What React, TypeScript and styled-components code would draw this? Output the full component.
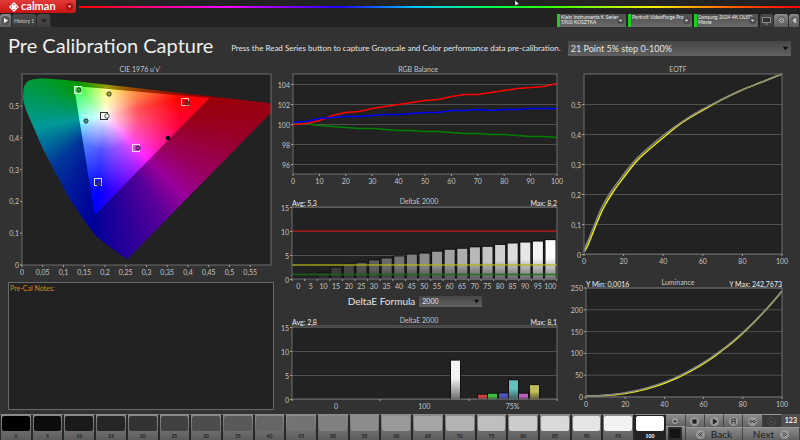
import React from "react";
import styled, { createGlobalStyle } from "styled-components";

const Global = createGlobalStyle`
  * { box-sizing: border-box; }
  html, body { margin: 0; background: #222; }
  body { font-family: Lato, sans-serif; color: #e6e6e6; }
  button, select, textarea { font-family: inherit; margin: 0; }
`;

const Page = styled.div`
  display: flex;
  flex-direction: column;
  min-height: 100vh;
  background: #222;
`;

const TopBar = styled.header`
  position: relative;
  display: flex;
  align-items: center;
  gap: 3px;
  height: 13px;
`;

const Pointer = styled.svg`
  position: absolute;
  left: 64.3%;
  top: 0;
`;

const BrandButton = styled.button`
  display: flex;
  align-items: center;
  width: 76px;
  height: 13px;
  padding: 0 3px 0 9px;
  border: 0;
  border-radius: 0 0 3px 0;
  background: linear-gradient(#e23a3a, #c81414);
  color: #fff;
  font-size: 11px;
  line-height: 13px;
  font-weight: 700;
  gap: 2px;
`;

const BrandName = styled.span`
  flex: 1;
  margin-top: -2px;
  text-align: left;
`;

const Spectrum = styled.div`
  flex: 1;
  height: 2px;
  background: linear-gradient(90deg, #f00, #f0f 20%, #20f 36%, #0cf 47%, #0f4 58%, #4f0 67%, #fe0 80%, #f60 90%, #f00);
`;

const TabBar = styled.nav`
  display: flex;
  align-items: flex-end;
  justify-content: space-between;
  height: 14px;
`;

const TabGroup = styled.div`
  display: flex;
  align-items: stretch;
  height: 13px;
`;

const Tab = styled.button<{ $w: number; $light?: boolean }>`
  display: flex;
  align-items: center;
  justify-content: center;
  width: ${(p) => p.$w}px;
  padding: 0;
  border: 0;
  border-right: 1px solid #2a2a2a;
  border-radius: 3px 3px 0 0;
  background: ${(p) => (p.$light ? "linear-gradient(#8a8a8a, #5c5c5c)" : "linear-gradient(#4a4a4a, #3c3c3c)")};
  color: #ccc;
  font-size: 5px;
  white-space: nowrap;
`;

const DeviceButton = styled.button<{ $w: number }>`
  display: flex;
  align-items: center;
  width: ${(p) => p.$w}px;
  margin-right: 2px;
  padding: 0 2px 0 1px;
  border: 0;
  border-left: 3px solid #14d414;
  background: linear-gradient(#505050, #686868);
  color: #eee;
  font-size: 5px;
  line-height: 5px;
  text-align: left;
  white-space: nowrap;
`;

const DeviceName = styled.span`
  display: flex;
  flex: 1;
  flex-direction: column;
  align-self: flex-start;
  padding-top: 1px;
  min-width: 0;
`;

const Main = styled.main`
  display: flex;
  flex: 1;
  flex-direction: column;
  padding: 0 6px 4px 8px;
  background: #323232;
`;

const HeaderRow = styled.div`
  display: grid;
  grid-template-columns: minmax(0, 220fr) minmax(0, 334fr) minmax(0, 224fr);
  gap: 4px;
  align-items: center;
  height: 35px;
  padding-right: 3px;
`;

const Title = styled.h1`
  margin: 0;
  color: #eee;
  font-size: 20px;
  line-height: 34px;
  font-weight: 400;
  white-space: nowrap;
`;

const Instruction = styled.p`
  margin: 6px 0 0;
  font-size: 8px;
  line-height: 12px;
  white-space: nowrap;
`;

const Select = styled.select<{ $size: number; $h: number; $w?: string }>`
  appearance: none;
  width: ${(p) => p.$w ?? "100%"};
  height: ${(p) => p.$h}px;
  padding: 0 12px 0 3px;
  border: 0;
  border-radius: 0;
  background: linear-gradient(#464646, #606060);
  color: #e4e4e4;
  font-size: ${(p) => p.$size}px;
`;

const SelectBox = styled.span`
  display: grid;
  align-items: center;
  > * { grid-area: 1 / 1; }
  > svg { justify-self: end; margin-right: 3px; pointer-events: none; }
`;

const WideSelectBox = styled(SelectBox)`
  padding-top: 7px;
`;

const Dashboard = styled.div`
  display: grid;
  flex: 1;
  grid-template-columns: 266fr 288fr 224fr;
  gap: 4px;
`;

const Column = styled.div`
  display: flex;
  flex-direction: column;
  min-width: 0;
`;

const ChartSvg = styled.svg`
  display: block;
  width: 100%;
  height: auto;
  overflow: visible;
  font-family: Lato, sans-serif;
`;

const Notes = styled.label`
  display: flex;
  flex: 1;
  flex-direction: column;
  margin-top: 2px;
  padding: 1px;
  border: 1px solid #6a6a6a;
  background: #222;
  color: #d08a1c;
  font-size: 7px;
  line-height: 8px;
`;

const NotesInput = styled.textarea`
  flex: 1;
  width: 100%;
  padding: 0;
  border: 0;
  outline: 0;
  resize: none;
  background: transparent;
  color: #ddd;
  font-size: 8px;
`;

const FormulaRow = styled.div`
  display: flex;
  align-items: center;
  justify-content: center;
  gap: 4px;
  height: 18px;
  padding-right: 14px;
`;

const FormulaLabel = styled.label`
  font-size: 10px;
  line-height: 16px;
`;

const Footer = styled.footer`
  display: flex;
  height: 26px;
  background: #3a3a3a;
`;

const SwatchList = styled.div`
  display: grid;
  flex: 665;
  grid-template-columns: repeat(21, 1fr);
`;

const Swatch = styled.button<{ $active?: boolean }>`
  display: flex;
  flex-direction: column;
  align-items: stretch;
  justify-content: space-between;
  min-width: 0;
  padding: 1px 1px 0;
  border: 1px solid #2c2626;
  border-top-color: #8c8c8c;
  border-bottom: 0;
  background: ${(p) => (p.$active ? "#222" : "linear-gradient(#8a8a8a, #5c5c5c)")};
  color: ${(p) => (p.$active ? "#fff" : "#222")};
  font-size: 5px;
  line-height: 7px;
  font-weight: 700;
`;

const Patch = styled.span<{ $level: number }>`
  height: 15px;
  border-radius: 2px;
  background: rgb(${(p) => p.$level}, ${(p) => p.$level}, ${(p) => p.$level});
`;

const Stack = styled.div`
  display: flex;
  flex: 20;
  flex-direction: column;
`;

const NavPanel = styled.div`
  display: flex;
  flex: 114;
  flex-direction: column;
`;

const NavRow = styled.div`
  display: flex;
  height: 13px;
`;

const NavButton = styled.button<{ $dark?: boolean; $h?: number }>`
  display: flex;
  flex: 1 1 0;
  align-items: center;
  justify-content: center;
  gap: 6px;
  min-width: 0;
  height: ${(p) => p.$h ?? 13}px;
  padding: 0;
  border: 0;
  border-right: 1px solid #444;
  border-top: 1px solid #999;
  background: ${(p) => (p.$dark ? "#383838" : "linear-gradient(#8a8a8a, #626262)")};
  color: #222;
  font-size: 10px;
  line-height: 11px;
`;

const Counter = styled.output`
  flex: 1 1 0;
  background: #505050;
  color: #eee;
  font-size: 7px;
  line-height: 13px;
  font-weight: 700;
  text-align: center;
`;

const Down = ({ color = "#0a0a0a", size = 5 }: { color?: string; size?: number }) => (
  <svg width={size} height={size} viewBox="0 0 6 6" aria-hidden="true">
    <path d="M0 1H6L3 5Z" fill={color} />
  </svg>
);

const RoundDown = ({ ring = "#4c4c4c" }: { ring?: string }) => (
  <svg width="7" height="7" viewBox="0 0 8 8" aria-hidden="true">
    <circle cx="4" cy="4" r="4" fill={ring} />
    <path d="M2 3H6L4 5.5Z" fill="#eee" />
  </svg>
);

const Logo = () => (
  <svg width="10" height="10" viewBox="0 0 12 12" aria-hidden="true">
    <g fill="none" stroke="#fff" strokeWidth="1.4">
      <path d="M6 1L8 3L6 5L4 3ZM6 7L8 9L6 11L4 9ZM3 4L5 6L3 8L1 6ZM9 4L11 6L9 8L7 6Z" />
    </g>
  </svg>
);

type IconName = "stop" | "play" | "save" | "loop" | "refresh" | "back" | "next" | "up" | "left" | "gear";

const glyphs: Record<IconName, React.ReactNode> = {
  stop: <rect x="3.5" y="3.5" width="4" height="4" fill="currentColor" />,
  play: <path d="M4 2.5L8.5 5.5L4 8.5Z" fill="currentColor" />,
  save: <path d="M3.5 2V9M7.5 2V9M3.5 5.5H7.5M3.5 2.5H7.5" />,
  loop: <path d="M5.5 5.5C4.5 4 2 3.6 2 5.5S4.5 7 5.5 5.5S9 3.6 9 5.5S6.5 7 5.5 5.5Z" />,
  refresh: <path d="M8 4A3 3 0 1 0 8.3 6.5M8.4 2.5V4.5H6.4" />,
  back: <path d="M5.5 3L3 5.5L5.5 8M8 3L5.5 5.5L8 8" />,
  next: <path d="M3 3L5.5 5.5L3 8M5.5 3L8 5.5L5.5 8" />,
  up: <path d="M3 7L5.5 4L8 7Z" fill="currentColor" />,
  left: <path d="M7 2.5L3.5 5.5L7 8.5Z" fill="currentColor" />,
  gear: <path d="M5.5 2V3.5M5.5 7.5V9M2 5.5H3.5M7.5 5.5H9M3 3L4 4M7 7L8 8M8 3L7 4M4 7L3 8M5.5 3.5A2 2 0 1 0 5.6 3.5" />,
};

const Icon = ({ name, disc = "#9a9a9a", size = 9 }: { name: IconName; disc?: string; size?: number }) => (
  <svg width={size} height={size} viewBox="0 0 11 11" fill="none" stroke="currentColor" strokeWidth="1" aria-hidden="true">
    <circle cx="5.5" cy="5.5" r="5.5" fill={disc} stroke="none" />
    {glyphs[name]}
  </svg>
);

interface Tick { at: number; label: string }

interface ChartProps {
  size: [number, number];
  box: [number, number, number, number];
  title: string;
  titleX: number;
  titleY?: number;
  xTicks: Tick[];
  yTicks: Tick[];
  marks?: number[];
  grid?: boolean;
  left?: string;
  right?: string;
  children?: React.ReactNode;
}

const Chart = ({ size, box, title, titleX, titleY = 10, xTicks, yTicks, marks, grid = true, left, right, children }: ChartProps) => {
  const [x0, y0, x1, y1] = box;
  return (
    <ChartSvg viewBox={`0 0 ${size[0]} ${size[1]}`} role="img" aria-label={title}>
      <rect x={x0} y={y0} width={x1 - x0} height={y1 - y0} fill="#222" />
      {grid && yTicks.map((t) => <path key={t.label} d={`M${x0} ${t.at}H${x1}`} stroke="#505050" strokeWidth="1" />)}
      {children}
      <rect x={x0} y={y0} width={x1 - x0} height={y1 - y0} fill="none" stroke="#6c6c6c" />
      <g stroke="#a0a0a0">
        {yTicks.map((t) => <path key={t.label} d={`M${x0 - 2} ${t.at}H${x0}`} />)}
        {(marks ?? xTicks.map((t) => t.at)).map((x) => <path key={x} d={`M${x} ${y1}V${y1 + 2}`} />)}
      </g>
      <g fill="#c4c4c4" fontSize="7">
        {yTicks.map((t) => <text key={t.label} x={x0 - 3} y={t.at + 3} textAnchor="end">{t.label}</text>)}
        {xTicks.map((t) => <text key={t.label} x={t.at} y={y1 + 10} textAnchor="middle">{t.label}</text>)}
        <text x={titleX} y={titleY} textAnchor="middle">{title}</text>
      </g>
      <g fill="#eee" fontSize="7">
        <text x={x0} y={y0 - 1}>{left}</text>
        <text x={x1} y={y0 - 1} textAnchor="end">{right}</text>
      </g>
    </ChartSvg>
  );
};

const range = (n: number) => Array.from({ length: n }, (_, i) => i);
const comma = (v: number) => String(Math.round(v * 100) / 100).replace(".", ",");
const line = (pts: number[][]) => "M" + pts.map((p) => p.join(" ")).join("L");

const smooth = (pts: number[][]) =>
  pts.slice(1).reduce((d, [x, y], i) => {
    const a = pts[Math.max(i - 1, 0)];
    const b = pts[i];
    const c = pts[Math.min(i + 2, pts.length - 1)];
    return `${d}C${b[0] + (x - a[0]) / 6} ${b[1] + (y - a[1]) / 6} ${x - (c[0] - b[0]) / 6} ${y - (c[1] - b[1]) / 6} ${x} ${y}`;
  }, `M${pts[0][0]} ${pts[0][1]}`);

const locus =
  "M119.3 197.3Q104 187 88.7 174.7Q82 167 76 158L62 138L48.7 113L35.3 88L25.3 64.7L18 48Q14 37 15.3 31.3Q15 23 20 19Q25 16 36 16.5L55.3 17.7L263 41.3V50.7Z";
const gamut = "M66 24L201.3 36L86.7 153Z";

const targets = [
  { x: 70, y: 28, dx: 1, dy: 0, fill: "#3c9d3c", line: "#dfd" },
  { x: 97, y: 31, dx: 4, dy: 1, fill: "#a8a23a", line: "#ffc" },
  { x: 177, y: 40, dx: 2, dy: 1, fill: "#9c2222", line: "#fcc" },
  { x: 77, y: 57, dx: 1, dy: 2, fill: "#3f9898", line: "#cff" },
  { x: 96, y: 54, dx: 3, dy: 0, fill: "#fff", line: "#333" },
  { x: 128, y: 86, dx: 2, dy: 0, fill: "#8c3a90", line: "#fdf" },
  { x: 90, y: 120, dx: 1, dy: 2, fill: "#3030a0", line: "#dde" },
];

const hue = (k: number) => {
  const c = (r: number, g: number, b: number) => `rgb(${r * k},${g * k},${b * k})`;
  return `conic-gradient(from 0deg at 97px 54px, ${c(255, 255, 0)} 4deg, ${c(255, 160, 0)} 34deg, ${c(255, 60, 0)} 64deg, ${c(255, 0, 0)} 77deg, ${c(255, 0, 60)} 97deg, ${c(255, 0, 160)} 120deg, ${c(255, 0, 255)} 135deg, ${c(150, 0, 255)} 150deg, ${c(0, 0, 255)} 186deg, ${c(0, 90, 255)} 225deg, ${c(0, 255, 255)} 261deg, ${c(0, 255, 120)} 290deg, ${c(0, 255, 0)} 318deg, ${c(255, 255, 0)} 364deg)`;
};

const Hues = styled.div<{ $k: number }>`
  width: 266px;
  height: 218px;
  background: ${(p) => hue(p.$k)};
`;

const CieChart = () => (
  <Chart
    size={[266, 218]}
    box={[14, 12, 263, 203]}
    title="CIE 1976 u'v'"
    titleX={132}
    grid={false}
    xTicks={range(12).map((i) => ({ at: 14 + i * 20.75, label: comma(i * 0.05) }))}
    yTicks={range(6).map((i) => ({ at: 203 - i * 31.8, label: comma(i / 10) }))}
  >
    <defs>
      <clipPath id="locus"><path d={locus} /></clipPath>
      <clipPath id="gamut"><path d={gamut} /></clipPath>
      <radialGradient id="white" gradientUnits="userSpaceOnUse" cx="97" cy="54" r="75">
        <stop offset="0" stopColor="#fff" />
        <stop offset="0.15" stopColor="#fff" stopOpacity="0.75" />
        <stop offset="0.45" stopColor="#fff" stopOpacity="0.32" />
        <stop offset="1" stopColor="#fff" stopOpacity="0" />
      </radialGradient>
    </defs>
    <g clipPath="url(#locus)"><foreignObject width="266" height="218"><Hues $k={0.6} /></foreignObject></g>
    <g clipPath="url(#gamut)">
      <foreignObject width="266" height="218"><Hues $k={1} /></foreignObject>
      <rect width="266" height="218" fill="url(#white)" />
    </g>
    {targets.map((t) => (
      <g key={`${t.x}-${t.y}`} fill="none">
        <rect x={t.x - 3.5} y={t.y - 3.5} width="7" height="7" stroke={t.line} strokeWidth="1" />
        <circle cx={t.x + t.dx} cy={t.y + t.dy} r="2.2" fill={t.fill} stroke="#222" strokeWidth="0.8" />
      </g>
    ))}
    <circle cx="160" cy="76" r="2.2" fill="#000" />
  </Chart>
);

const red = [100, 100.1, 100.4, 100.9, 101.2, 101.3, 101.6, 101.8, 102, 102.2, 102.4, 102.5, 102.8, 103, 103, 103.2, 103.4, 103.6, 103.7, 103.8, 104.1];
const green = [100.1, 100.1, 99.9, 99.8, 99.7, 99.6, 99.6, 99.5, 99.4, 99.4, 99.3, 99.3, 99.2, 99.1, 99.1, 99, 99, 98.9, 98.8, 98.8, 98.7];
const blue = [100.2, 100.3, 100.6, 100.7, 100.8, 100.8, 100.9, 101, 101, 101.1, 101.2, 101.2, 101.4, 101.4, 101.5, 101.4, 101.5, 101.5, 101.6, 101.6, 101.6];
const balance = (v: number[]) => line(v.map((y, i) => [15 + i * 13.2, 112.5 - (y - 95) * 10]));

const BalanceChart = () => (
  <Chart
    size={[288, 128]}
    box={[15, 12, 279, 112]}
    title="RGB Balance"
    titleX={140}
    xTicks={range(11).map((i) => ({ at: 15 + i * 26.4, label: String(i * 10) }))}
    yTicks={[96, 98, 100, 102, 104].map((v) => ({ at: 112.5 - (v - 95) * 10, label: String(v) }))}
  >
    <g fill="none" strokeWidth="1.5">
      <path d={balance(green)} stroke="#008000" />
      <path d={balance(red)} stroke="#f00" />
      <path d={balance(blue)} stroke="#00f" />
    </g>
  </Chart>
);

const steps = [0, 0.1, 1.4, 2.5, 3.1, 3.5, 4, 4.4, 4.8, 5.2, 5.4, 5.8, 6.2, 6.4, 6.7, 6.8, 7.2, 7.5, 7.7, 7.9, 8.2];
const deltaTicks = [0, 5, 10, 15].map((v) => ({ at: 89.5 - v * 4.8, label: String(v) }));

interface Bar { x: number; w: number; v: number; color: string }

const Bars = ({ bars }: { bars: Bar[] }) => (
  <>
    <defs>
      <linearGradient id="shade" x2="0" y2="1">
        <stop offset="0.45" stopColor="#222" stopOpacity="0" />
        <stop offset="1" stopColor="#222" stopOpacity="0.65" />
      </linearGradient>
    </defs>
    {bars.map((b) => (
      <g key={b.x}>
        <rect x={b.x - 1} y={88.5 - b.v * 4.8} width={b.w + 2} height={b.v * 4.8 + 1} fill="#101010" />
        <rect x={b.x} y={89.5 - b.v * 4.8} width={b.w} height={b.v * 4.8} fill={b.color} />
        <rect x={b.x} y={89.5 - b.v * 4.8} width={b.w} height={b.v * 4.8} fill="url(#shade)" />
      </g>
    ))}
  </>
);

const GrayDeltaChart = () => (
  <Chart
    size={[288, 102]}
    box={[14, 17, 279, 89]}
    title="DeltaE 2000"
    titleX={141}
    titleY={14}
    left="Avg: 5,3"
    right="Max: 8,2"
    xTicks={steps.map((_, i) => ({ at: 20.3 + i * 12.6, label: String(i * 5) }))}
    marks={range(22).map((i) => 14 + i * 12.6)}
    yTicks={deltaTicks}
  >
    <Bars bars={steps.map((v, i) => {
      const g = Math.round(24 + i * 11.5);
      return { x: 15.5 + i * 12.6, w: 10, v, color: `rgb(${g},${g},${g})` };
    })} />
    <g strokeWidth="1.5">
      <path d="M14 41H279" stroke="#a81414" />
      <path d="M14 75H279" stroke="#b4b420" strokeOpacity="0.85" />
      <path d="M14 84.5H279" stroke="#107010" strokeOpacity="0.85" />
    </g>
  </Chart>
);

const ColorDeltaChart = () => (
  <Chart
    size={[288, 100]}
    box={[14, 16, 279, 89]}
    title="DeltaE 2000"
    titleX={141}
    titleY={13}
    left="Avg: 2,8"
    right="Max: 8,1"
    xTicks={["0", "100", "75%"].map((label, i) => ({ at: 58 + i * 88.3, label }))}
    marks={[14, 102, 191, 279]}
    yTicks={deltaTicks}
  >
    <Bars bars={[
      { x: 173, w: 9, v: 8.1, color: "#f4f4f4" },
      { x: 200, w: 9, v: 1, color: "#cc4040" },
      { x: 210, w: 9, v: 1.2, color: "#40bc40" },
      { x: 221, w: 9, v: 1.3, color: "#5050c8" },
      { x: 231, w: 9, v: 4, color: "#64c0c0" },
      { x: 241, w: 9, v: 1.2, color: "#c05cc0" },
      { x: 252, w: 9, v: 3, color: "#c0bc58" },
    ]} />
  </Chart>
);

const eotf = [[14, 190], [17, 185], [22, 173], [28, 158], [34, 145], [43, 130], [54, 115], [65, 101], [74, 92], [94, 75], [113, 60], [133, 48], [153, 37], [172, 28], [192, 20], [212, 12]];
const eotfTarget = eotf.map(([x, y], i) => [x - (i > 0 && i < 10 ? 1.6 : 0), y - (i > 3 && i < 12 ? 1 : 0)]);

const EotfChart = () => (
  <Chart
    size={[224, 208]}
    box={[14, 12, 212, 192]}
    title="EOTF"
    titleX={108}
    xTicks={range(6).map((i) => ({ at: 14 + i * 39.6, label: String(i * 20) }))}
    yTicks={range(6).map((i) => ({ at: 192.5 - i * 30, label: comma(i / 10) }))}
  >
    <g fill="none" strokeWidth="1.5">
      <path d={smooth(eotf)} stroke="#ee0" />
      <path d={smooth(eotfTarget)} stroke="#888" />
    </g>
  </Chart>
);

const luminance = (lift: number) =>
  line(range(41).map((i) => [16 + i * 4.9, 126 - 105 * Math.pow(i / 40, 2.3) - lift * Math.sin((Math.PI * i) / 40)]));

const LuminanceChart = () => (
  <Chart
    size={[224, 140]}
    box={[16, 18, 212, 127]}
    title="Luminance"
    titleX={108}
    titleY={15}
    left="Y Min: 0,0016"
    right="Y Max: 242,7673"
    xTicks={range(6).map((i) => ({ at: 16 + i * 39.2, label: String(i * 20) }))}
    yTicks={range(6).map((i) => ({ at: 127 - i * 21.8, label: String(i * 50) }))}
  >
    <g fill="none" strokeWidth="1.5">
      <path d={luminance(0)} stroke="#ee0" />
      <path d={luminance(1.2)} stroke="#888" />
    </g>
  </Chart>
);

export default function App() {
  return (
    <Page>
      <Global />
      <TopBar>
        <BrandButton><Logo /><BrandName>calman</BrandName><RoundDown ring="#b01010" /></BrandButton>
        <Spectrum />
        <Pointer width="6" height="7" viewBox="0 0 6 7" aria-hidden="true">
          <path d="M1 0V6L3 4.5H5.5Z" fill="#fff" stroke="#000" strokeWidth="0.4" />
        </Pointer>
      </TopBar>
      <TabBar>
        <TabGroup>
          <Tab $w={12} $light aria-label="Play">
            <svg width="9" height="9" viewBox="0 0 9 9" aria-hidden="true"><circle cx="4.5" cy="4.5" r="4.5" fill="#555" /><path d="M3 2L7 4.5L3 7Z" fill="#fff" /></svg>
          </Tab>
          <Tab $w={25}>History 1</Tab>
          <Tab $w={14} aria-label="Tab menu"><Down color="#222" size={6} /></Tab>
        </TabGroup>
        <TabGroup>
          <DeviceButton $w={69}><DeviceName><span>Klein Instruments K Series</span><span>5900 KOSZTKA</span></DeviceName><RoundDown /></DeviceButton>
          <DeviceButton $w={64}><DeviceName>Portrait VideoForge Pro</DeviceName><RoundDown /></DeviceButton>
          <DeviceButton $w={64}><DeviceName><span>Samsung 2024 4K OLED</span><span>Movie</span></DeviceName><RoundDown /></DeviceButton>
          <Tab $w={14} aria-label="Display"><svg width="9" height="8" viewBox="0 0 9 8"><rect width="9" height="6" fill="#888" /><rect x="1" y="1" width="7" height="4" fill="#333" /><path d="M3 7H6" stroke="#888" /></svg></Tab>
          <Tab $w={15} $light aria-label="Settings"><Icon name="gear" disc="#666" /></Tab>
          <Tab $w={11} $light aria-label="Collapse"><Icon name="left" disc="#666" /></Tab>
        </TabGroup>
      </TabBar>
      <Main>
        <HeaderRow>
          <Title>Pre Calibration Capture</Title>
          <Instruction>Press the Read Series button to capture Grayscale and Color performance data pre-calibration.</Instruction>
          <WideSelectBox>
            <Select $size={9} $h={15} aria-label="Point series"><option>21 Point 5% step 0-100%</option></Select>
            <Down />
          </WideSelectBox>
        </HeaderRow>
        <Dashboard>
          <Column>
            <CieChart />
            <Notes>Pre-Cal Notes:<NotesInput /></Notes>
          </Column>
          <Column>
            <BalanceChart />
            <GrayDeltaChart />
            <FormulaRow>
              <FormulaLabel htmlFor="formula">DeltaE Formula</FormulaLabel>
              <SelectBox>
                <Select id="formula" $size={7} $h={11} $w="63px"><option>2000</option></Select>
                <Down />
              </SelectBox>
            </FormulaRow>
            <ColorDeltaChart />
          </Column>
          <Column>
            <EotfChart />
            <LuminanceChart />
          </Column>
        </Dashboard>
      </Main>
      <Footer>
        <SwatchList>
          {range(21).map((i) => (
            <Swatch key={i} $active={i === 20}><Patch $level={Math.round(i * 12.75)} />{i * 5}</Swatch>
          ))}
        </SwatchList>
        <Stack>
          <NavButton $h={9} aria-label="Expand"><Icon name="up" size={6} /></NavButton>
          <NavButton $h={17} aria-label="Pattern">
            <svg width="14" height="13" viewBox="0 0 14 13" aria-hidden="true"><rect width="14" height="13" rx="1" fill="#2c2c2c" /><rect x="2" y="2" width="10" height="9" fill="#141414" /></svg>
          </NavButton>
        </Stack>
        <NavPanel>
          <NavRow>
            <NavButton aria-label="Stop"><Icon name="stop" /></NavButton>
            <NavButton aria-label="Play"><Icon name="play" /></NavButton>
            <NavButton aria-label="Read series"><Icon name="save" /></NavButton>
            <NavButton aria-label="Continuous"><Icon name="loop" /></NavButton>
            <NavButton aria-label="Refresh" $dark><Icon name="refresh" disc="#484848" /></NavButton>
            <Counter>123</Counter>
          </NavRow>
          <NavRow>
            <NavButton><Icon name="back" />Back</NavButton>
            <NavButton>Next<Icon name="next" /></NavButton>
          </NavRow>
        </NavPanel>
      </Footer>
    </Page>
  );
}
